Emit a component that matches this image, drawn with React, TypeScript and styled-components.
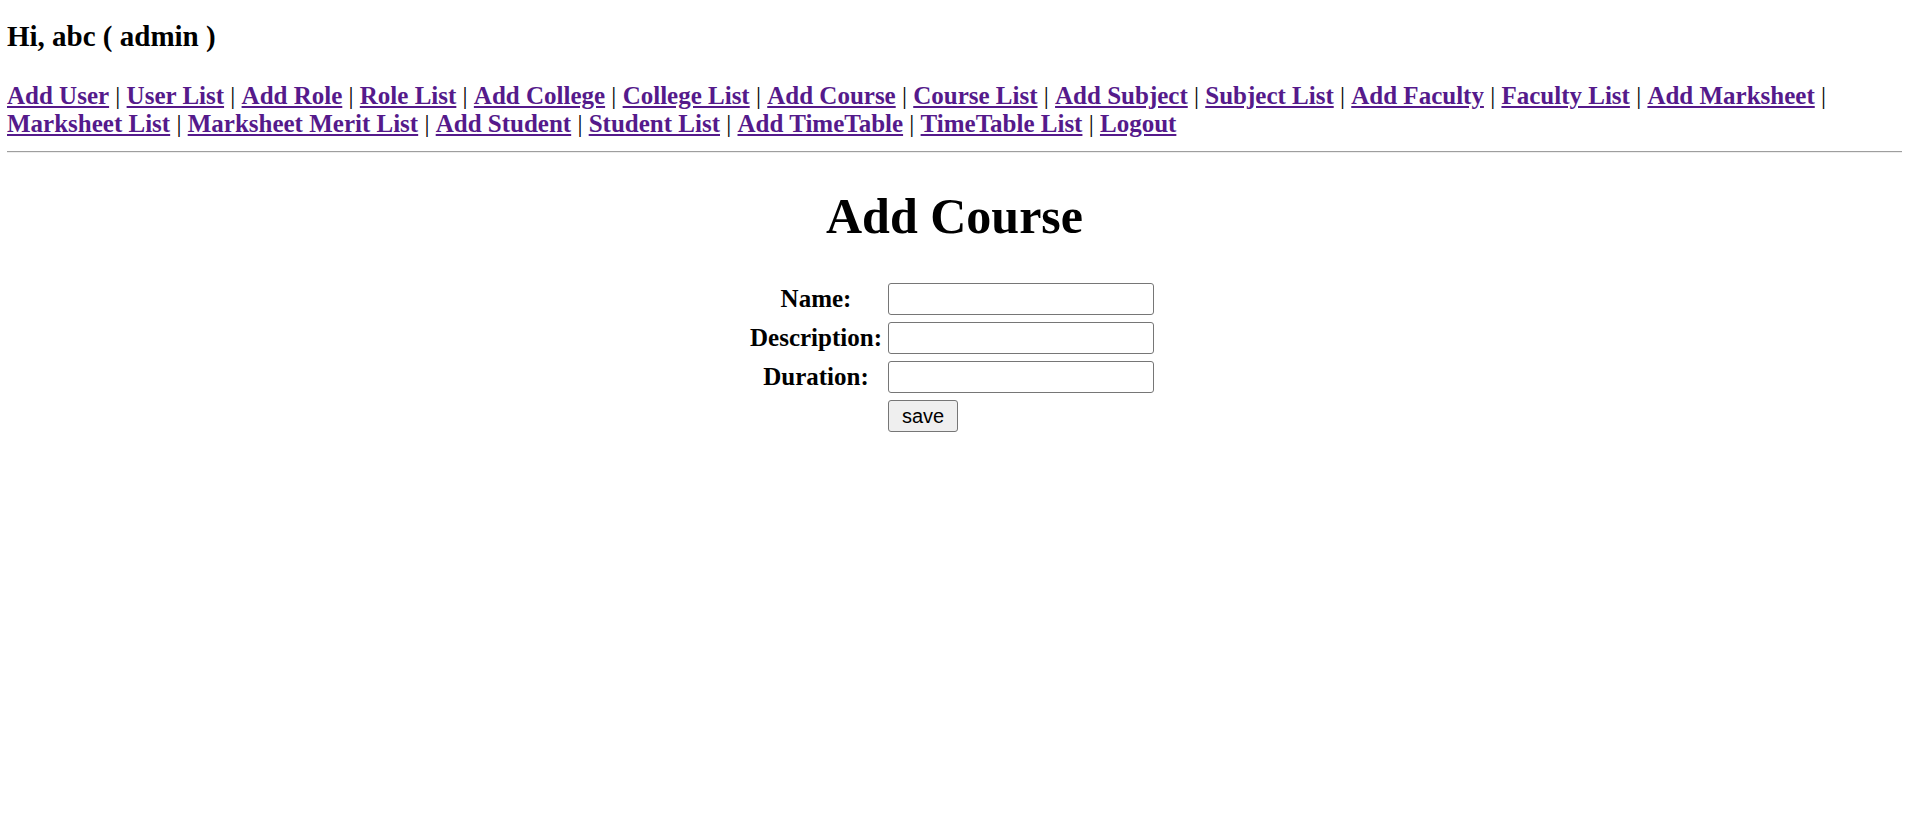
import React from "react";
import styled, { createGlobalStyle } from "styled-components";

const GlobalStyle = createGlobalStyle`
  html, body {
    margin: 0;
    padding: 0;
    background: #ffffff;
  }
  body {
    font-family: "Liberation Serif", "Times New Roman", serif;
    color: #000000;
  }
`;

const Page = styled.div`
  padding: 0 11px 0 7px;
`;

const Greeting = styled.h3`
  margin: 20px 0 0;
  font-size: 29px;
  font-weight: bold;
  line-height: normal;
`;

const Nav = styled.nav`
  margin-top: 29px;
  font-size: 25px;
  line-height: normal;
`;

const NavLink = styled.a`
  color: #551a8b;
  font-weight: bold;
  text-decoration: underline;
  cursor: pointer;
`;

const Separator = styled.span`
  font-weight: normal;
  color: #000000;
`;

const Divider = styled.hr`
  margin: 13px 0 0;
  height: 0;
  border: none;
  border-top: 1px solid #9e9e9e;
  border-bottom: 1px solid #eeeeee;
`;

const Title = styled.h1`
  margin: 34px 0 0;
  font-size: 50px;
  font-weight: bold;
  text-align: center;
  line-height: normal;
`;

const FormWrap = styled.div`
  display: flex;
  justify-content: center;
  padding-right: 8px;
  margin-top: 38px;
`;

const FormGrid = styled.form`
  display: grid;
  grid-template-columns: 138px 266px;
  column-gap: 3px;
  row-gap: 7px;
  align-items: center;
`;

const Label = styled.label`
  font-size: 25px;
  font-weight: bold;
  text-align: center;
  line-height: normal;
`;

const TextInput = styled.input`
  box-sizing: border-box;
  width: 266px;
  height: 32px;
  border: 1px solid #767676;
  border-radius: 3px;
  background: #ffffff;
  padding: 1px 3px;
  font-size: 20px;
  font-family: "Liberation Sans", Arial, sans-serif;
`;

const SaveButton = styled.button`
  justify-self: start;
  box-sizing: border-box;
  height: 32px;
  padding: 0 13px;
  border: 1px solid #767676;
  border-radius: 3px;
  background: #efefef;
  color: #000000;
  font-size: 20px;
  font-family: "Liberation Sans", Arial, sans-serif;
  line-height: 1;
`;

const links = [
  "Add User",
  "User List",
  "Add Role",
  "Role List",
  "Add College",
  "College List",
  "Add Course",
  "Course List",
  "Add Subject",
  "Subject List",
  "Add Faculty",
  "Faculty List",
  "Add Marksheet",
  "Marksheet List",
  "Marksheet Merit List",
  "Add Student",
  "Student List",
  "Add TimeTable",
  "TimeTable List",
  "Logout",
];

export default function App() {
  return (
    <>
      <GlobalStyle />
      <Page>
        <Greeting>Hi, abc ( admin )</Greeting>
        <Nav>
          {links.map((l, i) => (
            <React.Fragment key={l}>
              <NavLink href="#">{l}</NavLink>
              {i < links.length - 1 ? <Separator> | </Separator> : null}
            </React.Fragment>
          ))}
        </Nav>
        <Divider />
        <Title>Add Course</Title>
        <FormWrap>
          <FormGrid onSubmit={(e) => e.preventDefault()}>
            <Label htmlFor="name">Name:</Label>
            <TextInput id="name" type="text" />
            <Label htmlFor="description">Description:</Label>
            <TextInput id="description" type="text" />
            <Label htmlFor="duration">Duration:</Label>
            <TextInput id="duration" type="text" />
            <span />
            <SaveButton type="submit">save</SaveButton>
          </FormGrid>
        </FormWrap>
      </Page>
    </>
  );
}
